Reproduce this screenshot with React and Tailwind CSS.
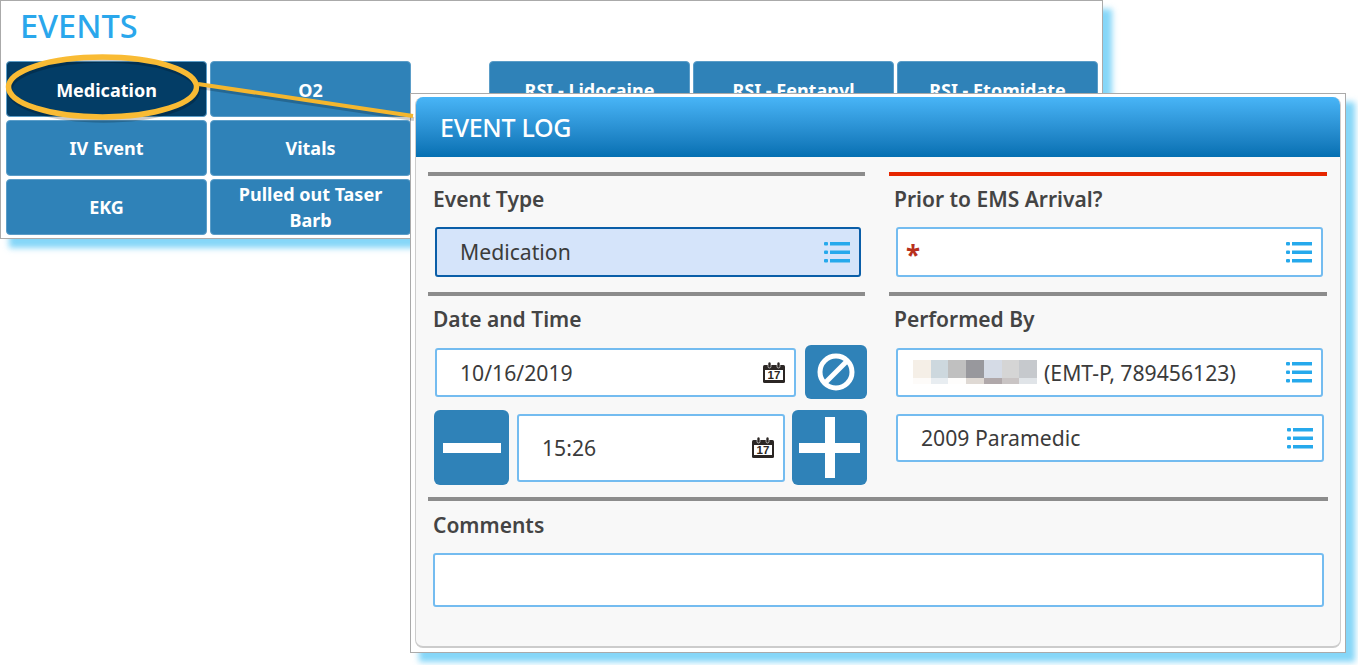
import React from 'react';

const ListIcon = () => (
  <svg width="26" height="23" viewBox="0 0 26 23" className="shrink-0">
    <g fill="#26a9ec">
      <rect x="0" y="1" width="4" height="3.5" rx="1" />
      <rect x="6" y="1" width="20" height="3.5" />
      <rect x="0" y="9.5" width="4" height="3.5" rx="1" />
      <rect x="6" y="9.5" width="20" height="3.5" />
      <rect x="0" y="18" width="4" height="3.5" rx="1" />
      <rect x="6" y="18" width="20" height="3.5" />
    </g>
  </svg>
);

const CalendarIcon = () => (
  <svg width="22" height="21" viewBox="0 0 22 21" className="shrink-0">
    <rect x="0" y="3" width="22" height="18" rx="1.5" fill="#2b2624" />
    <rect x="2" y="8" width="18" height="10" fill="#fff" />
    <rect x="5" y="0" width="3" height="6" rx="1.5" fill="#2b2624" stroke="#fff" strokeWidth="0.6" />
    <rect x="14" y="0" width="3" height="6" rx="1.5" fill="#2b2624" stroke="#fff" strokeWidth="0.6" />
    <text x="11" y="17.2" textAnchor="middle" fontSize="11.5" fontWeight="700" fill="#2b2624" fontFamily="Liberation Sans, sans-serif">17</text>
  </svg>
);

const EventButton = ({ label, active, className = '' }) => (
  <button
    className={`h-[56px] rounded-[4px] border border-[#5b9dc8] px-2 text-[18px] leading-[26px] font-bold text-white ${
      active ? 'bg-[#033d66]' : 'bg-[#2f82b8]'
    } ${className}`}
  >
    {label}
  </button>
);

const Rule = ({ red }) => <div className={`h-[4px] ${red ? 'bg-[#e62600]' : 'bg-[#8c8c8c]'}`} />;

const Label = ({ children, className = '' }) => (
  <div className={`pl-[5px] text-[21px] leading-[28px] font-semibold text-[#444] ${className}`}>{children}</div>
);

const Field = ({ children, icon, className = '' }) => (
  <div
    className={`flex items-center justify-between rounded-[3px] border-2 border-[#74bcf0] bg-white text-[21.2px] text-[#3b3b3b] ${className}`}
  >
    <div className="flex min-w-0 items-center">{children}</div>
    {icon}
  </div>
);

// blurred-out name in the performed by field
const blurTop = ['#f5efe7', '#cdd8de', '#c0c0c0', '#98989d', '#d5dbe6', '#d5d5d5', '#c6c9cd'];
const blurBottom = ['#fdfbf9', '#e8edf1', '#fefdfc', '#dfd9d4', '#b0a8aa', '#c9c4c4', '#e0e4e8'];

const BlurredName = () => (
  <div className="grid h-[24px] w-[124px] grid-cols-7 grid-rows-[18px_6px]">
    {blurTop.map((c) => (
      <div key={c} style={{ backgroundColor: c }} />
    ))}
    {blurBottom.map((c) => (
      <div key={c} style={{ backgroundColor: c }} />
    ))}
  </div>
);

const IconButton = ({ children, className = '' }) => (
  <button className={`flex shrink-0 items-center justify-center rounded-[6px] bg-[#2f82b8] ${className}`}>{children}</button>
);

export default function App() {
  return (
    <div className="relative h-[665px] w-full overflow-hidden bg-white font-['Noto_Sans',sans-serif]">
      {/* Events panel */}
      <div className="h-[239px] w-[1103px] border border-[#aaaaaa] bg-white px-[5px] shadow-[9px_9px_6px_rgba(92,200,245,0.75)]">
        <h1 className="h-[60px] pt-[3px] pl-[14px] text-[32.5px] leading-[44px] font-medium text-[#2aa7ec]">EVENTS</h1>
        <div className="grid grid-cols-[201px_201px_72px_201px_201px_201px] gap-[3px]">
          <EventButton label="Medication" active className="pt-[2px]" />
          <EventButton label="O2" className="pt-[2px]" />
          <div />
          <EventButton label="RSI - Lidocaine" className="pt-[2px]" />
          <EventButton label="RSI - Fentanyl" className="pt-[2px]" />
          <EventButton label="RSI - Etomidate" className="pt-[2px]" />
          <EventButton label="IV Event" />
          <EventButton label="Vitals" />
          <div />
          <div />
          <div />
          <div />
          <EventButton label="EKG" />
          <EventButton label="Pulled out Taser Barb" />
        </div>
      </div>

      {/* Event log window */}
      <div className="absolute top-[93px] left-[410px] h-[560px] w-[936px] border border-[#aaaaaa] bg-white px-[4px] pt-[3px] shadow-[9px_9px_6px_rgba(92,200,245,0.75)]">
        <div className="flex h-[551px] flex-col overflow-hidden rounded-[8px] border border-t-0 border-b-2 border-[#cccccc] bg-[#f8f8f8]">
          <div className="flex h-[60px] shrink-0 items-center bg-gradient-to-b from-[#48b5f7] to-[#0470b2] pt-[1px] pl-[24px] text-[25px] font-medium tracking-[-0.3px] text-white">
            EVENT LOG
          </div>

          <div className="px-[12px] pt-[15px]">
            <div className="grid grid-cols-[437px_438px] gap-x-[24px]">
              <div>
                <Rule />
                <Label className="mt-[9px] mb-[14px]">Event Type</Label>
                <div className="mr-[4px] ml-[7px] flex h-[50px] items-center justify-between rounded-[3px] border-2 border-[#0a5ea8] bg-[#d5e4fa] pr-[9px] pl-[23px] text-[21.2px] text-[#3b3b3b]">
                  Medication
                  <ListIcon />
                </div>
              </div>
              <div>
                <Rule red />
                <Label className="mt-[9px] mb-[14px]">Prior to EMS Arrival?</Label>
                <Field icon={<ListIcon />} className="mr-[4px] ml-[7px] h-[50px] pr-[9px] pl-[8px]">
                  <span className="pt-[5px] text-[26px] leading-[30px] font-bold text-[#b8301c]">*</span>
                </Field>
              </div>
            </div>

            <div className="mt-[15px] grid grid-cols-[437px_438px] gap-x-[24px]">
              <div>
                <Rule />
                <Label className="mt-[9px] mb-[12px]">Date and Time</Label>
                <div className="-mr-[2px] ml-[7px] flex h-[54px] items-center justify-between">
                  <Field icon={<CalendarIcon />} className="h-[49px] w-[361px] pr-[9px] pl-[23px]">
                    <span className="pt-[1px]">10/16/2019</span>
                  </Field>
                  <IconButton className="h-[54px] w-[62px]">
                    <svg width="38" height="38" viewBox="0 0 38 38" fill="none" stroke="#fff" strokeWidth="5">
                      <circle cx="19" cy="19" r="16" />
                      <path d="M8 30L30 8" />
                    </svg>
                  </IconButton>
                </div>
                <div className="mt-[11px] -mr-[2px] ml-[6px] flex h-[75px] items-center gap-[8px]">
                  <IconButton className="h-[75px] w-[75px]">
                    <svg width="58" height="10" viewBox="0 0 58 10">
                      <rect width="58" height="10" fill="#fff" />
                    </svg>
                  </IconButton>
                  <Field icon={<CalendarIcon />} className="h-[68px] w-[268px] pr-[9px] pl-[23px]">
                    15:26
                  </Field>
                  <IconButton className="-ml-[1px] h-[75px] w-[75px]">
                    <svg width="61" height="61" viewBox="0 0 61 61" fill="#fff">
                      <rect x="0" y="26" width="61" height="10" />
                      <rect x="26" y="0" width="10" height="61" />
                    </svg>
                  </IconButton>
                </div>
              </div>
              <div>
                <Rule />
                <Label className="mt-[9px] mb-[15px]">Performed By</Label>
                <Field icon={<ListIcon />} className="mr-[4px] ml-[7px] h-[49px] pr-[9px] pl-[15px]">
                  <BlurredName />
                  <span className="ml-[7px]">(EMT-P, 789456123)</span>
                </Field>
                <Field icon={<ListIcon />} className="mt-[17px] mr-[3px] ml-[7px] h-[48px] pr-[9px] pl-[23px]">
                  2009 Paramedic
                </Field>
              </div>
            </div>

            <div className="mt-[12px]">
              <Rule />
              <Label className="mt-[10px] mb-[14px]">Comments</Label>
              <div className="mr-[4px] ml-[5px] h-[54px] rounded-[3px] border-2 border-[#74bcf0] bg-white" />
            </div>
          </div>
        </div>
      </div>

      {/* Callout ring around the selected event */}
      <svg className="pointer-events-none absolute top-0 left-0" width="430" height="130" viewBox="0 0 430 130" fill="none">
        <g stroke="#000" strokeOpacity="0.2" transform="translate(1 3)">
          <ellipse cx="102.5" cy="87" rx="94" ry="30" strokeWidth="5.5" />
          <path d="M198 84L413 116" strokeWidth="4" />
        </g>
        <ellipse cx="102.5" cy="87" rx="94" ry="30" stroke="#f9bb34" strokeWidth="5.5" />
        <path d="M198 84L413 116" stroke="#f4b62e" strokeWidth="4" />
      </svg>
    </div>
  );
}
